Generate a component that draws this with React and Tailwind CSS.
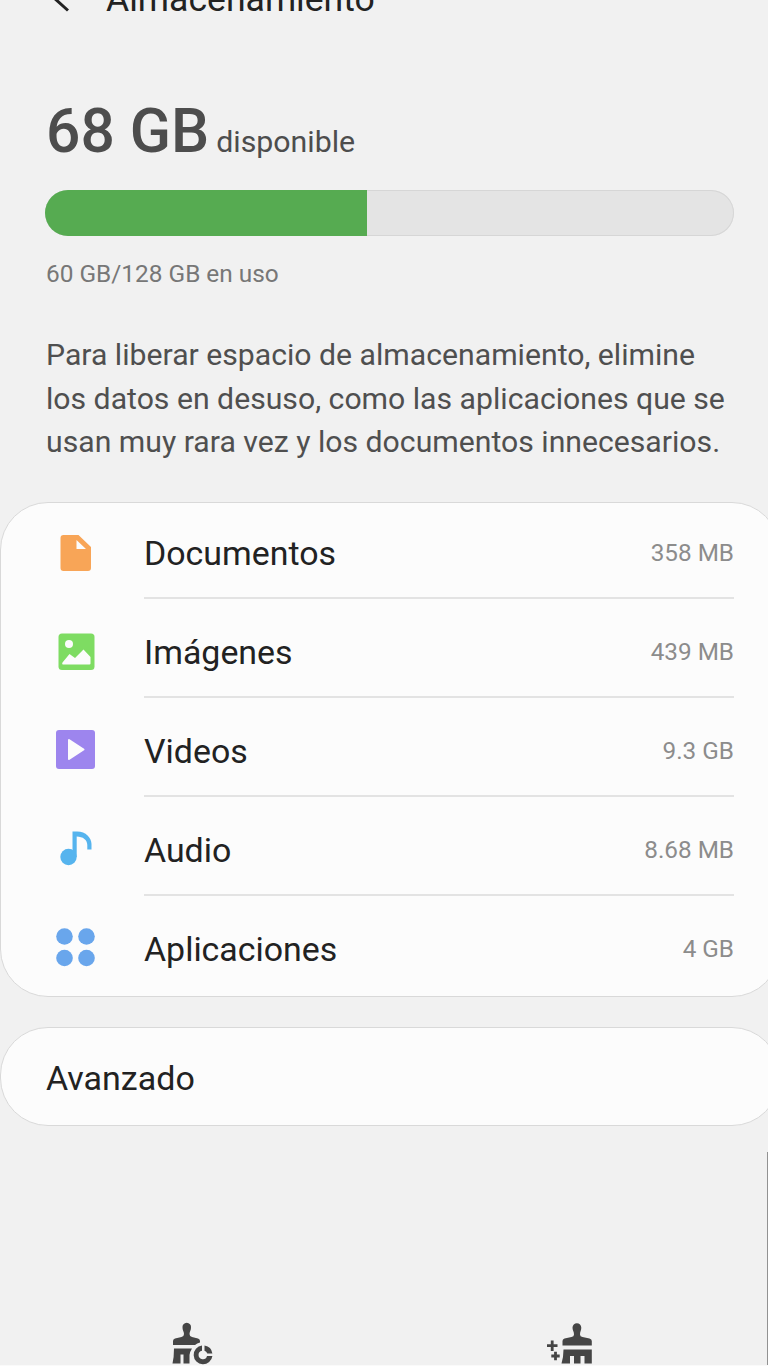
const DocumentIcon = () => (
  <svg viewBox="0 0 40 40" className="size-10" fill="#f8a557">
    <path fillRule="evenodd" d="M7.500 2H22.500L35 14V35Q35 38 32 38H7.500Q4.500 38 4.500 35V5Q4.500 2 7.500 2ZM20.500 7V16H30Z" />
  </svg>
);

const ImageIcon = () => (
  <svg viewBox="0 0 40 40" className="size-10">
    <rect x="2.500" y="1.500" width="36" height="36.500" rx="3.500" fill="#7edc62" />
    <circle cx="13" cy="12" r="4" fill="#fcfcfc" />
    <path d="M6.500 30.500L13.500 22L19 26L27.500 17.500L34.500 25V31.500Q34.500 32.500 33.500 32.500H7.500Q5.500 32.500 6.500 30.500Z" fill="#fcfcfc" />
  </svg>
);

const VideoIcon = () => (
  <svg viewBox="0 1 40 40" className="size-10 overflow-visible">
    <rect x="0" y="0" width="39" height="39" rx="3" fill="#9d85ee" />
    <path d="M13 10L27.500 19.500L13 29Z" fill="#fcfcfc" stroke="#fcfcfc" strokeWidth="2" strokeLinejoin="round" />
  </svg>
);

const AudioIcon = () => (
  <svg viewBox="0 1 40 40" className="size-10 overflow-visible" fill="#56b4ee">
    <circle cx="12.500" cy="28" r="8.200" />
    <path d="M16.500 2.500H21C30 2.500 35.500 9 35.500 15V20.500H31.300V16C31.300 11 27 7.500 20.700 7.500V28H16.500Z" />
  </svg>
);

const AppsIcon = () => (
  <svg viewBox="0 1.500 40 40" className="size-10 overflow-visible" fill="#69a6ec">
    <circle cx="8.500" cy="9" r="8.300" />
    <circle cx="30.500" cy="9" r="8.300" />
    <circle cx="8.500" cy="30.500" r="8.300" />
    <circle cx="30.500" cy="30.500" r="8.300" />
  </svg>
);

const categories = [
  { name: "Documentos", size: "358 MB", Icon: DocumentIcon },
  { name: "Imágenes", size: "439 MB", Icon: ImageIcon },
  { name: "Videos", size: "9.3 GB", Icon: VideoIcon },
  { name: "Audio", size: "8.68 MB", Icon: AudioIcon },
  { name: "Aplicaciones", size: "4 GB", Icon: AppsIcon },
];

const Category = ({ name, size, Icon, last }) => (
  <li className="flex h-[99px] pl-[55px] pr-[45px]">
    <div className="flex w-[88px] shrink-0 items-center pt-[6px]">
      <Icon />
    </div>
    <div className={last ? "flex grow items-center justify-between border-b-2 border-transparent" : "flex grow items-center justify-between border-b-2 border-[#e3e3e3]"}>
      <span className="pt-[10px] text-[33.9px] leading-10 text-[#222]">{name}</span>
      <span className="pt-[8px] text-[24.3px] leading-8 text-[#8c8c8c]">{size}</span>
    </div>
  </li>
);

export default function App() {
  return (
    <div className="relative flex h-[1366px] w-[768px] flex-col overflow-hidden bg-[#f1f1f1] font-['Roboto',sans-serif]">
      <header className="-mt-[22px] flex h-10 shrink-0 items-center pl-[46px]">
        <svg viewBox="0 0 30 40" className="h-10 w-[30px]" fill="none" stroke="#222" strokeWidth="3">
          <path d="M22 5L7 19L22 32.500" />
        </svg>
        <h1 className="pl-[30px] pt-[2px] text-[35.6px] leading-10 text-[#222]">Almacenamiento</h1>
      </header>

      <section className="mt-[78px] shrink-0 pl-[45px] pr-[34px]">
        <div className="flex items-baseline pl-px text-[#4d4d4d]">
          <span className="text-[60.5px] font-medium leading-[72px]">68 GB</span>
          <span className="pl-[7px] text-[30.3px] leading-10">disponible</span>
        </div>
        <div className="mt-[22px] flex h-[46px] overflow-hidden rounded-full bg-[#e4e4e4] ring-1 ring-inset ring-[#d6d6d6]">
          <div className="w-[322px] bg-[#56ab51]" />
        </div>
        <p className="mt-[23px] pl-px text-[24.4px] leading-[30px] text-[#777]">60 GB/128 GB en uso</p>
        <p className="mt-[44px] whitespace-nowrap pl-px text-[30.2px] leading-[43.5px] text-[#4f4f4f]">
          Para liberar espacio de almacenamiento, elimine
          <br />
          los datos en desuso, como las aplicaciones que se
          <br />
          usan muy rara vez y los documentos innecesarios.
        </p>
      </section>

      <ul className="mt-[38.5px] h-[495px] w-[780px] shrink-0 rounded-[48px] border border-[#d9d9d9] bg-[#fcfcfc] *:first:-mt-[3px]">
        {categories.map((c, i) => (
          <Category key={c.name} {...c} last={i === categories.length - 1} />
        ))}
      </ul>

      <div className="mt-[30px] flex h-[99px] w-[780px] shrink-0 items-center rounded-[48px] border border-[#d9d9d9] bg-[#fcfcfc] pl-[45px] pt-[3px] text-[34px] text-[#222]">
        Avanzado
      </div>

      <nav className="mt-auto flex h-[46px] shrink-0 justify-between border-b border-[#fafafa] pl-[170px] pr-[174px]">
        <svg viewBox="0 0 46 45" className="h-[45px] w-[46px]" fill="#454545">
          <path d="M12.500 7.700A4.300 4.300 0 1 1 21 7.700C21 10.500 19.500 11.500 19.500 14Q19.500 16.500 22 17L28 18.500Q30 19 30 21V22.500Q27 23 25 25H3V21Q3 19 5 18.500L11.500 17Q14 16.500 14 14C14 11.500 12.500 10.500 12.500 7.700Z" />
          <path d="M4 28.500H22Q20 31.500 19.500 35V43.500H13.500V34.500H10.500V43.500H2.500Q4 37 4 28.500Z" />
          <path d="M32 25.500A9.400 9.400 0 1 0 42.400 36H37A4.300 4.300 0 1 1 32 30.700Z" />
          <path d="M34.500 25.500A9.400 9.400 0 0 1 42.400 33.500H37.300Q36.500 31.500 34.500 30.700Z" />
        </svg>
        <svg viewBox="0 0 48 45" className="h-[45px] w-12" fill="#454545">
          <path d="M26.500 7.700A4.400 4.400 0 1 1 35.300 7.700C35.300 10.500 34 11.500 34 14.500Q34 16.500 36.500 17L43.500 18.500Q45.800 19 45.800 21V25.500H16.500V21Q16.500 19 18.500 18.500L25.500 17Q28 16.500 28 14.500C28 11.500 26.500 10.500 26.500 7.700Z" />
          <path d="M17.500 29.500H45.800V43.500H38.500V36H34.500V43.500H28V36H24V43.500H15.500Q17.500 37 17.500 29.500Z" />
          <path d="M6.200 20.500V31M1 25.700H11.500M9.500 31.800V40.200M5.300 36H13.700" stroke="#454545" strokeWidth="2.800" fill="none" />
        </svg>
      </nav>
      <div className="absolute right-0 top-[1152px] h-[213px] w-px bg-[#929292]" />
    </div>
  );
}
